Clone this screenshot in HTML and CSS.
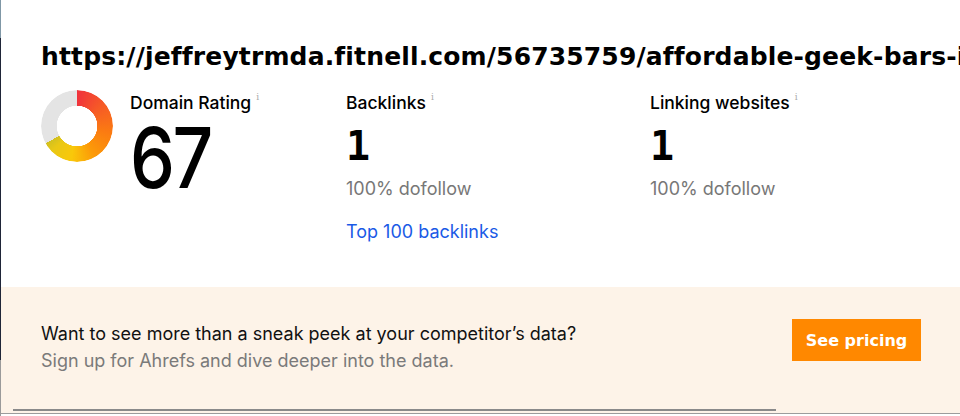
FILE: index.html
```html
<!DOCTYPE html>
<html lang="en">
<head>
<meta charset="utf-8">
<title>Backlink checker</title>
<link rel="stylesheet" href="styles.css">
</head>
<body>
<div class="modal">
  <section class="summary">
    <h1 class="url">https://jeffreytrmda.fitnell.com/56735759/affordable-geek-bars-in-the-uk</h1>
    <div class="stats">
      <div class="stat stat-dr">
        <div class="donut"></div>
        <div class="dr-text">
          <div class="label">Domain Rating<span class="info">i</span></div>
          <div class="dr-value">67</div>
        </div>
      </div>
      <div class="stat">
        <div class="label">Backlinks<span class="info">i</span></div>
        <div class="value">1</div>
        <div class="sub">100% dofollow</div>
        <a class="link" href="#">Top 100 backlinks</a>
      </div>
      <div class="stat">
        <div class="label">Linking websites<span class="info">i</span></div>
        <div class="value">1</div>
        <div class="sub">100% dofollow</div>
      </div>
    </div>
  </section>
  <section class="promo">
    <div class="promo-row">
      <div class="promo-text">
        <p class="promo-title">Want to see more than a sneak peek at your competitor’s data?</p>
        <p class="promo-sub">Sign up for Ahrefs and dive deeper into the data.</p>
      </div>
      <a class="btn" href="#">See pricing</a>
    </div>
    <div class="scrollbar"></div>
  </section>
</div>
</body>
</html>
```
FILE: styles.css
```css
html, body {
  margin: 0;
  padding: 0;
}
body {
  width: 960px;
  height: 416px;
  overflow: hidden;
  background: linear-gradient(to bottom, #7f97a6 0 38px, #1f2538 38px 360px, #9a9a9a 360px);
  font-family: Inter, "Noto Sans", sans-serif;
  color: #000;
}
.modal {
  margin-left: 1px;
  height: 416px;
  display: flex;
  flex-direction: column;
  background: #fff;
}
.summary {
  height: 287px;
  padding: 40px 0 0 40px;
  box-sizing: border-box;
  overflow: hidden;
}
.url {
  margin: 0;
  white-space: nowrap;
  overflow: hidden;
  font-family: "DejaVu Sans", sans-serif;
  font-weight: 700;
  font-size: 25px;
  line-height: 34px;
  letter-spacing: 0.15px;
}
.stats {
  margin-top: 12px;
  display: grid;
  grid-template-columns: 305px 304px 305px;
}
.stat-dr {
  display: flex;
  gap: 17px;
}
.donut {
  margin-top: 4px;
  flex: none;
  width: 72px;
  height: 72px;
  border-radius: 50%;
  background: conic-gradient(#f0323c 0deg, #f65a26 50deg, #fb7a12 100deg, #fc9a08 150deg, #f9c80a 190deg, #e9c815 225deg, #d2c020 241deg, #e4e4e4 241deg, #e4e4e4 360deg);
  -webkit-mask: radial-gradient(circle, transparent 20px, #000 20.5px);
  mask: radial-gradient(circle, transparent 20px, #000 20.5px);
}
.label {
  font-size: 17.5px;
  line-height: 22px;
  font-weight: 500;
  white-space: nowrap;
}
.info {
  font-family: "DejaVu Serif", serif;
  font-size: 9px;
  color: #aaa;
  vertical-align: 9px;
  margin-left: 5px;
  font-weight: 400;
}
.dr-value {
  margin-top: 2px;
  font-family: Inter, sans-serif;
  font-size: 84px;
  line-height: 84px;
  font-weight: 500;
  letter-spacing: -3px;
  transform: scaleX(0.85);
  transform-origin: 0 50%;
}
.value {
  margin-top: 8px;
  font-family: "DejaVu Sans Mono", monospace;
  font-weight: 700;
  font-size: 40px;
  line-height: 48px;
}
.sub {
  margin-top: 7px;
  font-size: 18px;
  line-height: 24px;
  color: #777;
}
.link {
  display: block;
  margin-top: 19px;
  font-size: 18px;
  line-height: 24px;
  color: #1a5ae6;
  text-decoration: none;
}
.promo {
  height: 127px;
  background: #fdf3e8;
  border-bottom: 1px solid #9c9c9c;
  display: flex;
  flex-direction: column;
  padding: 32px 39px 0 40px;
  box-sizing: border-box;
}
.promo-row {
  display: flex;
  justify-content: space-between;
  align-items: flex-start;
}
.promo-text {
  margin-top: 3px;
}
.promo-title {
  margin: 0;
  font-size: 18px;
  line-height: 24px;
  color: #111;
}
.promo-sub {
  margin: 3px 0 0;
  font-size: 18px;
  line-height: 24px;
  color: #7a7a7a;
}
.btn {
  width: 129px;
  height: 42px;
  background: #ff8800;
  color: #fff;
  font-family: "DejaVu Sans", sans-serif;
  font-weight: 700;
  font-size: 16px;
  display: flex;
  align-items: center;
  justify-content: center;
  text-decoration: none;
}
.scrollbar {
  margin-top: auto;
  margin-left: -28px;
  margin-bottom: 2px;
  width: 763px;
  height: 2px;
  background: #8a8a8a;
}
```
